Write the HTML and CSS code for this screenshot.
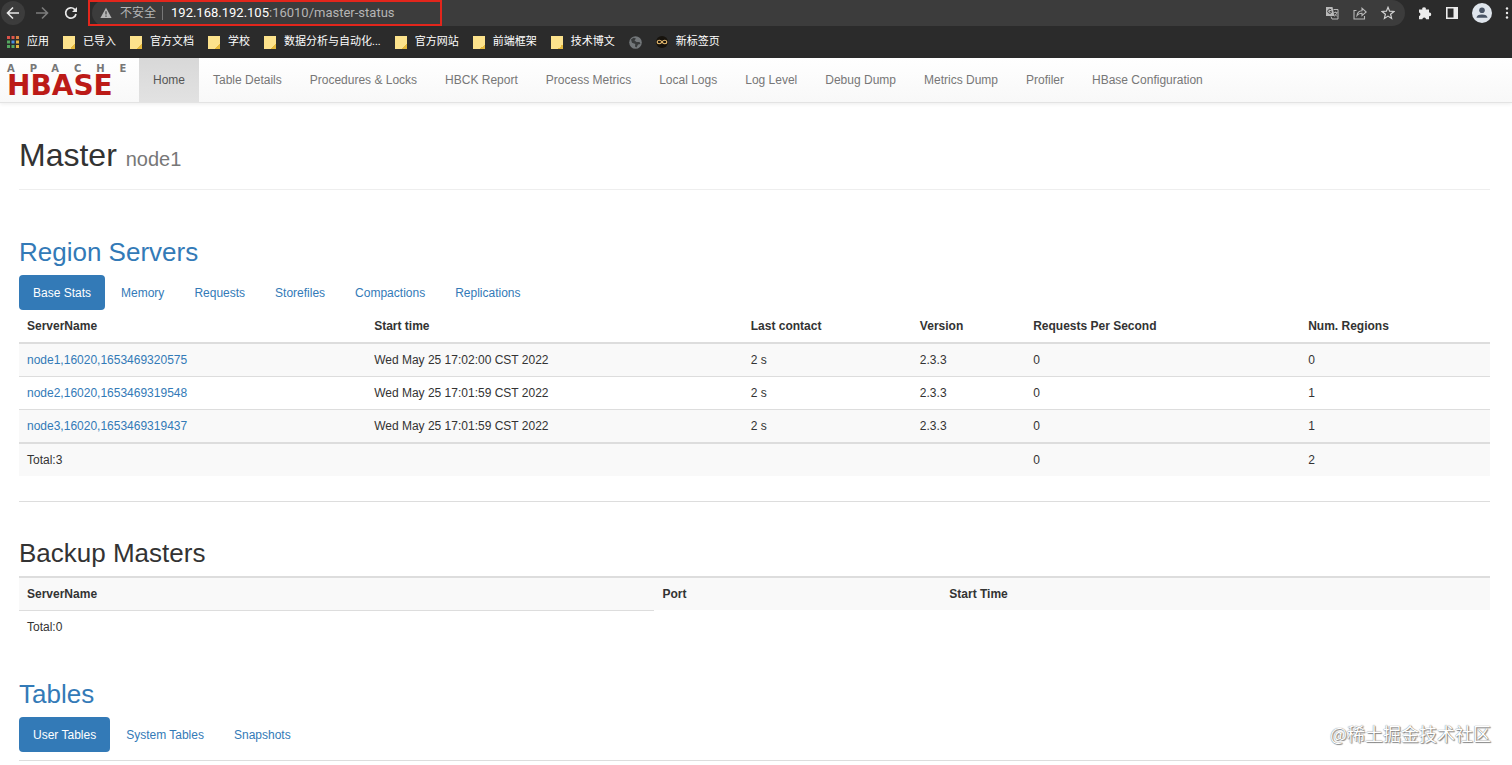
FILE: index.html
```html
<!DOCTYPE html>
<html lang="en">
<head>
    <meta charset="UTF-8">
    <meta name="viewport" content="width=device-width, initial-scale=1.0">
    <title>Master: node1</title>
    <link rel="stylesheet" href="styles.css">
</head>
<body>
    <div class="browser" lang="zh">
        <div class="toolbar">
            <button class="tool-btn back" aria-label="Back">
                <svg width="16" height="16" viewBox="0 0 16 16"><path d="M14 8H3M8 2.500L2.500 8L8 13.500" fill="none" stroke="#e8e8e8" stroke-width="1.600"/></svg>
            </button>
            <button class="tool-btn" aria-label="Forward">
                <svg width="16" height="16" viewBox="0 0 16 16"><path d="M2 8H13M8 2.500L13.500 8L8 13.500" fill="none" stroke="#7c7c7c" stroke-width="1.600"/></svg>
            </button>
            <button class="tool-btn" aria-label="Reload">
                <svg width="16" height="16" viewBox="0 0 16 16"><path d="M13 9A5.200 5.200 0 1 1 11.600 4.300L13 5.800" fill="none" stroke="#e8e8e8" stroke-width="1.700"/><path d="M14 2V7H9z" fill="#e8e8e8"/></svg>
            </button>
            <div class="omnibox">
                <svg width="12" height="12" viewBox="0 0 12 12"><path d="M6 .8L11.600 11H.4z" fill="#b5b5b5"/><path d="M6 4.300V7.500M6 8.500V9.800" stroke="#3c3c3c" stroke-width="1.200"/></svg>
                <span class="insecure">不安全</span>
                <label class="host" for="url">192.168.192.105</label>
                <input class="path" id="url" type="text" value=":16010/master-status">
                <button class="tool-btn" aria-label="Translate">
                    <svg width="14" height="14" viewBox="0 0 14 14"><path d="M1 1h6.500l2 9H1z" fill="#b9b9b9"/><path d="M8.500 3.500H13V13H7L6 10.500" fill="none" stroke="#b9b9b9"/><path d="M6.300 4A2 2 0 1 0 6.400 6.500V5.600H4.800" fill="none" stroke="#3c3c3c"/><path d="M8.800 6.500h3.600M10.600 5.500v1M12 6.500Q11.300 9 9 10.500M9.800 8L12.200 10.600" fill="none" stroke="#b9b9b9" stroke-width=".8"/></svg>
                </button>
                <button class="tool-btn" aria-label="Share">
                    <svg width="14" height="14" viewBox="0 0 14 14"><path d="M3.500 4.500H1V13H11.500V10M4 9.500Q4.500 5 9 4.800V2.200L13.200 6L9 9.600V7.200Q5.800 7 4 9.500z" fill="none" stroke="#b9b9b9" stroke-width="1.100"/></svg>
                </button>
                <button class="tool-btn" aria-label="Bookmark">
                    <svg width="14" height="14" viewBox="0 0 14 14"><path d="M7 1.300L8.600 5.200L12.900 5.500L9.600 8.200L10.600 12.400L7 10.100L3.400 12.400L4.400 8.200L1.100 5.500L5.400 5.200z" fill="none" stroke="#d2d2d2" stroke-width="1.200"/></svg>
                </button>
            </div>
            <button class="tool-btn" aria-label="Extensions">
                <svg width="14" height="14" viewBox="0 0 14 14"><path d="M1 3.500H4.300A1.800 1.800 0 1 1 7.800 3.500H11V6.600A1.800 1.800 0 1 1 11 10.100V13.300H8A1.800 1.800 0 0 0 4.400 13.300H1V10A1.800 1.800 0 0 0 1 6.500z" fill="#ececec"/></svg>
            </button>
            <button class="tool-btn" aria-label="Side panel">
                <svg width="14" height="14" viewBox="0 0 14 14"><path d="M1.800 1.800H12.200V12.200H1.800z" fill="none" stroke="#ececec" stroke-width="1.600"/><path d="M8.500 1H13V13H8.500z" fill="#ececec"/></svg>
            </button>
            <button class="tool-btn" aria-label="Profile">
                <svg width="20" height="20" viewBox="0 0 20 20"><circle cx="10" cy="10" r="10" fill="#dfe5ec"/><circle cx="10" cy="7.200" r="2.800" fill="#4a5566"/><path d="M4.500 14.800Q4.800 11.400 10 11.400T15.500 14.800z" fill="#4a5566"/></svg>
            </button>
            <button class="tool-btn" aria-label="Menu">
                <svg width="4" height="14" viewBox="0 0 4 14"><circle cx="2" cy="2.500" r="1.200" fill="#ececec"/><circle cx="2" cy="7" r="1.200" fill="#ececec"/><circle cx="2" cy="11.500" r="1.200" fill="#ececec"/></svg>
            </button>
            <div class="highlight"></div>
        </div>
        <div class="bookmarks">
            <a href="#">
                <svg width="12" height="12" viewBox="0 0 12 12"><path d="M0 0h3v3H0z" fill="#d9534a"/><path d="M4.500 0h3v3h-3z" fill="#e0574c"/><path d="M9 0h3v3H9z" fill="#d98040"/><path d="M0 4.500h3v3H0z" fill="#55a860"/><path d="M4.500 4.500h3v3h-3z" fill="#4b8fe0"/><path d="M9 4.500h3v3H9zM9 9h3v3H9z" fill="#e3b341"/><path d="M0 9h3v3H0zM4.500 9h3v3h-3z" fill="#55a860"/></svg>
                应用
            </a>
            <a href="#"><i class="folder"></i>已导入</a>
            <a href="#"><i class="folder"></i>官方文档</a>
            <a href="#"><i class="folder"></i>学校</a>
            <a href="#"><i class="folder"></i>数据分析与自动化...</a>
            <a href="#"><i class="folder"></i>官方网站</a>
            <a href="#"><i class="folder"></i>前端框架</a>
            <a href="#"><i class="folder"></i>技术博文</a>
            <a href="#" aria-label="Web page">
                <svg width="13" height="13" viewBox="0 0 13 13"><circle cx="6.500" cy="6.500" r="6.300" fill="#73777a"/><path d="M2 3.500L4.500 1.800L7 2.500L5.500 4.500L7.500 6H10.500L11.500 8L9 8.500L7.500 11.500L6 10.500L6.300 8L3 6.800z" fill="#383a3b"/></svg>
            </a>
            <a href="#">
                <svg width="12" height="12" viewBox="0 0 12 12"><circle cx="6" cy="6" r="6" fill="#17130d"/><path d="M6 6C4.500 3.500 1.200 3.800 1.200 6S4.500 8.500 6 6S10.800 3.800 10.800 6S7.500 8.500 6 6z" fill="none" stroke="#e5b96e" stroke-width="1.200"/></svg>
                新标签页
            </a>
        </div>
    </div>

    <nav class="navbar">
        <a class="logo" href="#">
            <span class="logo-apache">APACHE</span>
            <span class="logo-hbase">HBASE</span>
        </a>
        <a class="nav-link active" href="#">Home</a>
        <a class="nav-link" href="#">Table Details</a>
        <a class="nav-link" href="#">Procedures &amp; Locks</a>
        <a class="nav-link" href="#">HBCK Report</a>
        <a class="nav-link" href="#">Process Metrics</a>
        <a class="nav-link" href="#">Local Logs</a>
        <a class="nav-link" href="#">Log Level</a>
        <a class="nav-link" href="#">Debug Dump</a>
        <a class="nav-link" href="#">Metrics Dump</a>
        <a class="nav-link" href="#">Profiler</a>
        <a class="nav-link" href="#">HBase Configuration</a>
    </nav>

    <main class="container">
        <header class="page-header">
            <h1>Master <small>node1</small></h1>
        </header>

        <section class="servers">
            <h2><a href="#">Region Servers</a></h2>
            <div class="pills">
                <a class="pill active" href="#">Base Stats</a>
                <a class="pill" href="#">Memory</a>
                <a class="pill" href="#">Requests</a>
                <a class="pill" href="#">Storefiles</a>
                <a class="pill" href="#">Compactions</a>
                <a class="pill" href="#">Replications</a>
            </div>
            <table class="table">
                <colgroup>
                    <col class="col-server"><col class="col-start"><col class="col-contact"><col class="col-version"><col class="col-requests"><col>
                </colgroup>
                <thead>
                    <tr><th>ServerName</th><th>Start time</th><th>Last contact</th><th>Version</th><th>Requests Per Second</th><th>Num. Regions</th></tr>
                </thead>
                <tbody>
                    <tr class="striped"><td><a href="#">node1,16020,1653469320575</a></td><td>Wed May 25 17:02:00 CST 2022</td><td>2 s</td><td>2.3.3</td><td>0</td><td>0</td></tr>
                    <tr><td><a href="#">node2,16020,1653469319548</a></td><td>Wed May 25 17:01:59 CST 2022</td><td>2 s</td><td>2.3.3</td><td>0</td><td>1</td></tr>
                    <tr class="striped"><td><a href="#">node3,16020,1653469319437</a></td><td>Wed May 25 17:01:59 CST 2022</td><td>2 s</td><td>2.3.3</td><td>0</td><td>1</td></tr>
                </tbody>
                <tfoot>
                    <tr class="striped"><td>Total:3</td><td></td><td></td><td></td><td>0</td><td>2</td></tr>
                </tfoot>
            </table>
        </section>

        <section class="backup">
            <h2>Backup Masters</h2>
            <table class="table backup-table">
                <colgroup>
                    <col class="col-backup"><col class="col-port"><col>
                </colgroup>
                <tbody>
                    <tr class="striped"><th>ServerName</th><th>Port</th><th>Start Time</th></tr>
                    <tr><td>Total:0</td></tr>
                </tbody>
            </table>
        </section>

        <section class="tables">
            <h2><a href="#">Tables</a></h2>
            <div class="pills">
                <a class="pill active" href="#">User Tables</a>
                <a class="pill" href="#">System Tables</a>
                <a class="pill" href="#">Snapshots</a>
            </div>
        </section>
    </main>
    <div class="watermark" lang="zh">@稀土掘金技术社区</div>
</body>
</html>
```

FILE: styles.css
```css
* {
    box-sizing: border-box;
}
body {
    margin: 0;
    background-color: #fff;
    color: #333;
    font-family: "Liberation Sans", Arial, sans-serif;
    font-size: 12px;
    line-height: 18px;
}
a {
    color: #337ab7;
    text-decoration: none;
}
svg {
    display: block;
    flex: none;
}

/* Browser bar */
.browser {
    background-color: #2b2b2b;
    font-family: Roboto, "Noto Sans CJK SC", sans-serif;
}
.toolbar {
    position: relative;
    display: flex;
    align-items: center;
    gap: 13px;
    height: 26px;
    padding: 0 3px 0 5px;
    overflow: hidden;
}
.tool-btn {
    flex: none;
    padding: 0;
    border: none;
    background: none;
    cursor: pointer;
}
.tool-btn.back {
    border-radius: 50%;
    background-color: #3c3c3c;
    box-shadow: 0 0 0 4px #3c3c3c;
}
.omnibox {
    flex: 1;
    display: flex;
    align-items: center;
    height: 26px;
    padding: 0 10px 0 8px;
    border-radius: 13px;
    background-color: #3c3c3c;
    color: #b5b5b5;
    font-size: 13px;
}
.insecure {
    margin: 0 6px 0 8px;
    font-size: 12px;
}
.host {
    padding-left: 8px;
    border-left: 1px solid #777;
    color: #fff;
    line-height: 14px;
}
.path {
    flex: 1;
    padding: 0;
    border: none;
    outline: none;
    background: none;
    color: #b5b5b5;
    font: inherit;
}
.omnibox .tool-btn {
    margin-left: 14px;
}
.highlight {
    position: absolute;
    top: 0;
    left: 88px;
    width: 354px;
    height: 26px;
    border: 2px solid #e2261c;
    pointer-events: none;
}
.bookmarks {
    display: flex;
    align-items: center;
    gap: 14px;
    height: 32px;
    padding-left: 7px;
    font-size: 11px;
}
.bookmarks a {
    display: flex;
    align-items: center;
    gap: 8px;
    color: #fff;
    white-space: nowrap;
}
.folder {
    width: 12px;
    height: 13px;
    background: linear-gradient(135deg, #fce28c 80%, #e5b93c 80%);
}

/* Navigation */
.navbar {
    display: flex;
    height: 45px;
    border-bottom: 1px solid #e3e3e3;
    background: linear-gradient(#fff, #f8f8f8);
    box-shadow: 0 1px 4px rgba(0, 0, 0, 0.08);
}
.logo {
    display: flex;
    flex-direction: column;
    width: 139px;
    padding: 6px 0 0 7px;
    font-family: "DejaVu Sans", sans-serif;
    font-weight: bold;
}
.logo-apache {
    color: #777;
    font-size: 10px;
    line-height: 10px;
    letter-spacing: 15px;
}
.logo-hbase {
    color: #bc1a17;
    font-size: 28px;
    line-height: 24px;
}
.nav-link {
    padding: 13px 14px;
    color: #777;
    white-space: nowrap;
}
.nav-link.active {
    background: linear-gradient(#d8d8d8, #e2e2e2);
    color: #555;
}

/* Content */
.container {
    padding: 0 22px 0 19px;
}
h1, h2 {
    margin: 0;
    font-weight: normal;
}
h1 {
    font-size: 32px;
    line-height: 36px;
}
h1 small {
    color: #777;
    font-size: 20px;
    line-height: 1;
}
h2 {
    margin-bottom: 8px;
    font-size: 26px;
    line-height: 30px;
}
.page-header {
    padding: 34px 0 16px;
    border-bottom: 1px solid #eee;
}
.servers {
    padding: 47px 0 25px;
    border-bottom: 1px solid #ddd;
}
.backup {
    padding: 36px 0;
}
.tables {
    padding-bottom: 8px;
    border-bottom: 1px solid #ddd;
}
.pills {
    display: flex;
    gap: 2px;
}
.pill {
    padding: 9px 14px 8px;
    border-radius: 4px;
}
.pill.active {
    background-color: #337ab7;
    color: #fff;
}

/* Tables */
.table {
    width: 100%;
    table-layout: fixed;
    border-spacing: 0;
}
th, td {
    padding: 7px 8px;
    text-align: left;
}
thead th {
    border-bottom: 2px solid #ddd;
}
tbody tr + tr td {
    border-top: 1px solid #ddd;
}
tfoot td {
    border-top: 2px solid #ddd;
}
.striped {
    background-color: #f9f9f9;
}
.backup-table {
    border-top: 2px solid #ddd;
}
.col-server {
    width: 23.6%;
}
.col-start {
    width: 25.6%;
}
.col-contact {
    width: 11.5%;
}
.col-version {
    width: 7.7%;
}
.col-requests {
    width: 18.7%;
}
.col-backup {
    width: 43.2%;
}
.col-port {
    width: 19.5%;
}

.watermark {
    position: absolute;
    right: 21px;
    top: 720px;
    color: #fff;
    font-family: "Noto Sans CJK SC", sans-serif;
    font-size: 18px;
    line-height: 26px;
    text-shadow: 0 0 1px #555, 1px 1px 1px #888;
}
```
